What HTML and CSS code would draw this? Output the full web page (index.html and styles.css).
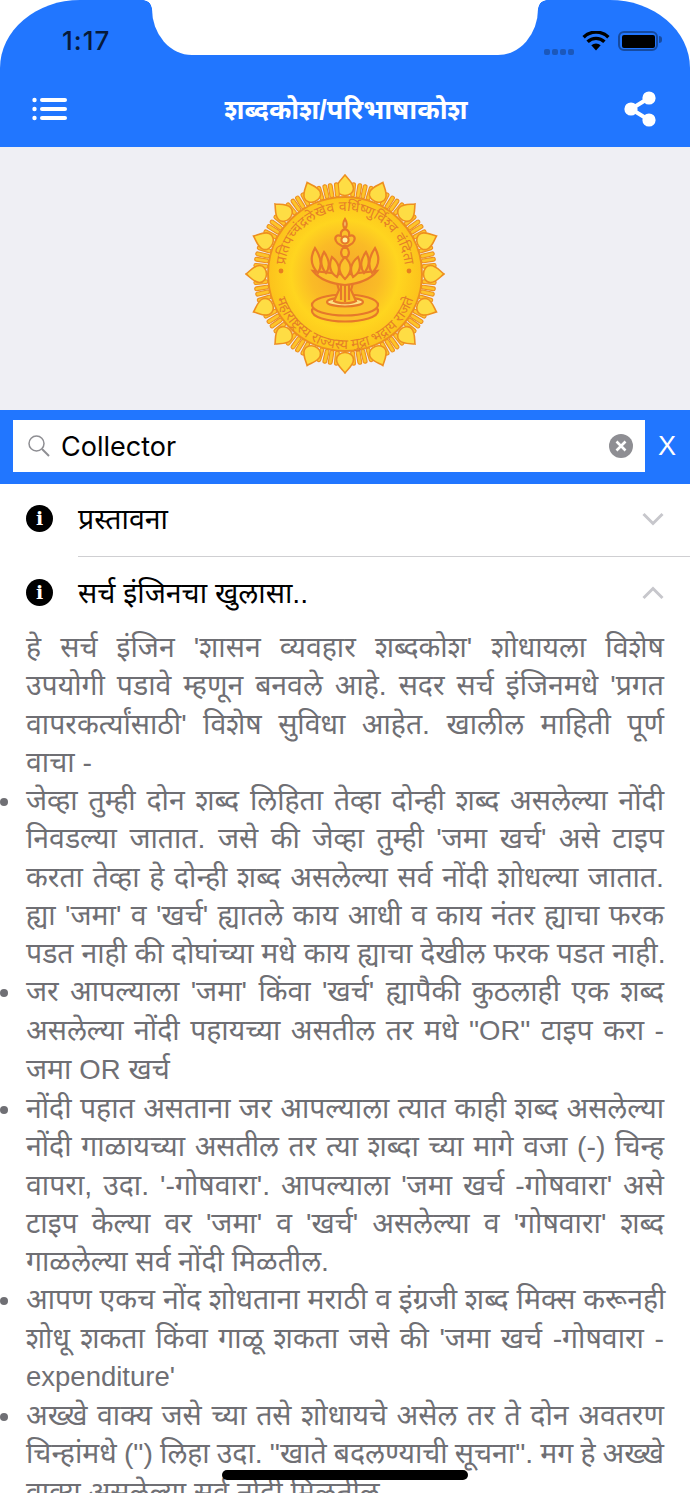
FILE: index.html
```html
<!DOCTYPE html>
<html lang="mr">
<head>
  <meta charset="UTF-8">
  <meta name="viewport" content="width=device-width, initial-scale=1.0">
  <title>शब्दकोश/परिभाषाकोश</title>
  <link rel="stylesheet" href="styles.css">
</head>
<body>
  <div class="app">
    <header class="top-bar">
      <div class="status-bar">
        <span class="clock">1:17</span>
        <div class="notch"></div>
        <div class="status-icons">
          <span class="signal"><i></i><i></i><i></i><i></i></span>
          <svg class="wifi" viewBox="0 0 28 20" width="28" height="20">
            <path d="M14 19.500 9.300 14.300a7 7 0 0 1 9.400 0z" fill="#000"/>
            <path d="M5.600 10.800a12 12 0 0 1 16.800 0" fill="none" stroke="#000" stroke-width="3.400"/>
            <path d="M1.600 6.200a17.800 17.800 0 0 1 24.800 0" fill="none" stroke="#000" stroke-width="3.400"/>
          </svg>
          <span class="battery"><span class="battery-fill"></span></span>
        </div>
      </div>
      <div class="nav-bar">
        <svg class="menu-icon" viewBox="0 0 36 24" width="36" height="24">
          <g fill="#fff">
            <circle cx="2.500" cy="3" r="2.200"/><circle cx="2.500" cy="12" r="2.200"/><circle cx="2.500" cy="21" r="2.200"/>
            <rect x="8" y="1" width="27" height="4" rx="2"/><rect x="8" y="10" width="27" height="4" rx="2"/><rect x="8" y="19" width="27" height="4" rx="2"/>
          </g>
        </svg>
        <h1 class="nav-title">शब्दकोश/परिभाषाकोश</h1>
        <svg class="share-icon" viewBox="0 0 32 36" width="32" height="36">
          <path d="M25 7 7 18l18 11" fill="none" stroke="#fff" stroke-width="4"/>
          <circle cx="25" cy="7" r="6.600" fill="#fff"/><circle cx="7" cy="18" r="6.600" fill="#fff"/><circle cx="25" cy="29" r="6.600" fill="#fff"/>
        </svg>
      </div>
    </header>

    <section class="logo-panel">
      <svg class="emblem" viewBox="-100 -100 200 200" width="200" height="200">
        <defs>
          <radialGradient id="disc">
            <stop offset="0" stop-color="#f5a62c"/>
            <stop offset="0.45" stop-color="#fabb26"/>
            <stop offset="0.7" stop-color="#ffd51f"/>
            <stop offset="1" stop-color="#fcc21c"/>
          </radialGradient>
          <rect id="lobe" x="-1.900" y="-91.500" width="3.800" height="14" rx="1.900" fill="#fdc52a" stroke="#ee8f1f" stroke-width="1.100"/>
          <g id="fringe">
            <use href="#lobe" transform="rotate(5.500)"/>
            <use href="#lobe" transform="rotate(9.500)"/>
            <use href="#lobe" transform="rotate(13)"/>
            <use href="#lobe" transform="rotate(17)"/>
          </g>
          <g id="petal">
            <path d="M0-99C3-95 8.500-91 8.500-85.500 8.500-81 4-78.500 0-78.500-4-78.500-8.500-81-8.500-85.500-8.500-91-3-95 0-99z" fill="#fedd44" stroke="#ee8f1f" stroke-width="1.600"/>
          </g>
          <g id="ray">
            <use href="#fringe"/>
            <use href="#petal"/>
          </g>
          <path id="ring-top" d="M-60-3A60 60 0 0 1 60-3"/>
          <path id="ring-bottom" d="M-72 3A72 72 0 0 0 72 3"/>
        </defs>
        <g>
          <use href="#ray"/><use href="#ray" transform="rotate(22.500)"/><use href="#ray" transform="rotate(45)"/><use href="#ray" transform="rotate(67.500)"/>
          <use href="#ray" transform="rotate(90)"/><use href="#ray" transform="rotate(112.500)"/><use href="#ray" transform="rotate(135)"/><use href="#ray" transform="rotate(157.500)"/>
          <use href="#ray" transform="rotate(180)"/><use href="#ray" transform="rotate(202.500)"/><use href="#ray" transform="rotate(225)"/><use href="#ray" transform="rotate(247.500)"/>
          <use href="#ray" transform="rotate(270)"/><use href="#ray" transform="rotate(292.500)"/><use href="#ray" transform="rotate(315)"/><use href="#ray" transform="rotate(337.500)"/>
        </g>
        <circle r="77" fill="url(#disc)" stroke="#ee8f1f" stroke-width="2"/>
        <text class="emblem-text"><textPath href="#ring-top" startOffset="50%" text-anchor="middle">प्रतिपच्चंद्रलेखेव वर्धिष्णुर्विश्व वंदिता</textPath></text>
        <text class="emblem-text"><textPath href="#ring-bottom" startOffset="50%" text-anchor="middle">महाराष्ट्रस्य राज्यस्य मुद्रा भद्राय राजते</textPath></text>
        <circle cx="-64" cy="-3" r="2.400" fill="#e8801f"/><circle cx="64" cy="-3" r="2.400" fill="#e8801f"/>
        <g class="lamp">
          <ellipse cx="0" cy="37" rx="33" ry="10.500"/>
          <ellipse cx="0" cy="31" rx="33" ry="10.500"/>
          <ellipse cx="0" cy="28" rx="18" ry="4.500" fill="#fde283"/>
          <path d="M-8 9H8L6 16 11 27C6 30-6 30-11 27L-6 16z"/>
          <path d="M-4 10V26M0 10V28M4 10V26" fill="none"/>
          <path d="M-32-3C-24 7-12 10 0 11 12 10 24 7 32-3L14-1 0 1-14-1z"/>
          <path d="M-27-1C-35-9-35-17-30-26-24-17-22-9-27-1z"/>
          <path d="M27-1C35-9 35-17 30-26 24-17 22-9 27-1z"/>
          <path d="M-19-1C-25-8-25-15-21-22-16-15-14-8-19-1z"/>
          <path d="M19-1C25-8 25-15 21-22 16-15 14-8 19-1z"/>
          <path d="M-8 3C-16-2-16-10-13-17-7-12-4-5-8 3z"/>
          <path d="M8 3C16-2 16-10 13-17 7-12 4-5 8 3z"/>
          <path d="M0 5C-8-3-7-10 0-17 7-10 8-3 0 5z"/>
          <path d="M-2-17C-5-20-4-24-2-26H2C4-24 5-20 2-17z"/>
          <path d="M-9-33C-11-37-8-40-4-38-5-42-3-44 0-45 3-44 5-42 4-38 8-40 11-37 9-33 8-30 4-29 3-28H-3C-4-29-8-30-9-33z"/>
          <circle cx="0" cy="-34" r="3.600" fill="#fff0a8"/>
          <path d="M0-45C-3-49-2-52 0-55 2-52 3-49 0-45z" fill="#fde283"/>
        </g>
      </svg>
    </section>

    <div class="search-bar">
      <div class="search-field">
        <svg class="search-glass" viewBox="0 0 24 24" width="24" height="24">
          <circle cx="9.500" cy="9.500" r="7.500" fill="none" stroke="#8e8e93" stroke-width="1.500"/>
          <path d="M15 15l7 7" stroke="#8e8e93" stroke-width="2"/>
        </svg>
        <span class="search-value">Collector</span>
        <svg class="search-clear" viewBox="0 0 24 24" width="24" height="24">
          <circle cx="12" cy="12" r="12" fill="#8e8e93"/>
          <path d="M7.500 7.500l9 9M16.500 7.500l-9 9" stroke="#fff" stroke-width="2.600"/>
        </svg>
      </div>
      <span class="search-cancel">X</span>
    </div>

    <div class="accordion-row first">
      <span class="info-icon">i</span>
      <span class="row-title">प्रस्तावना</span>
      <svg class="chevron" viewBox="0 0 22 14" width="22" height="14"><path d="M1.500 2 11 11.500 20.500 2" fill="none" stroke="#c7c7cc" stroke-width="3"/></svg>
    </div>
    <div class="accordion-row second">
      <span class="info-icon">i</span>
      <span class="row-title">सर्च इंजिनचा खुलासा..</span>
      <svg class="chevron" viewBox="0 0 22 14" width="22" height="14"><path d="M1.500 12 11 2.500 20.500 12" fill="none" stroke="#c7c7cc" stroke-width="3"/></svg>
    </div>

    <div class="help-text">
      <p>
        <span class="line">हे सर्च इंजिन 'शासन व्यवहार शब्दकोश' शोधायला विशेष</span>
        <span class="line">उपयोगी पडावे म्हणून बनवले आहे. सदर सर्च इंजिनमधे 'प्रगत</span>
        <span class="line">वापरकर्त्यांसाठी' विशेष सुविधा आहेत. खालील माहिती पूर्ण</span>
        <span class="line end">वाचा -</span>
      </p>
      <ul>
        <li>
          <span class="line">जेव्हा तुम्ही दोन शब्द लिहिता तेव्हा दोन्ही शब्द असलेल्या नोंदी</span>
          <span class="line">निवडल्या जातात. जसे की जेव्हा तुम्ही 'जमा खर्च' असे टाइप</span>
          <span class="line">करता तेव्हा हे दोन्ही शब्द असलेल्या सर्व नोंदी शोधल्या जातात.</span>
          <span class="line">ह्या 'जमा' व 'खर्च' ह्यातले काय आधी व काय नंतर ह्याचा फरक</span>
          <span class="line end">पडत नाही की दोघांच्या मधे काय ह्याचा देखील फरक पडत नाही.</span>
        </li>
        <li>
          <span class="line">जर आपल्याला 'जमा' किंवा 'खर्च' ह्यापैकी कुठलाही एक शब्द</span>
          <span class="line">असलेल्या नोंदी पहायच्या असतील तर मधे "<span class="latin">OR</span>" टाइप करा -</span>
          <span class="line end">जमा <span class="latin">OR</span> खर्च</span>
        </li>
        <li>
          <span class="line">नोंदी पहात असताना जर आपल्याला त्यात काही शब्द असलेल्या</span>
          <span class="line">नोंदी गाळायच्या असतील तर त्या शब्दा च्या मागे वजा (-) चिन्ह</span>
          <span class="line">वापरा, उदा. '-गोषवारा'. आपल्याला 'जमा खर्च -गोषवारा' असे</span>
          <span class="line">टाइप केल्या वर 'जमा' व 'खर्च' असलेल्या व 'गोषवारा' शब्द</span>
          <span class="line end">गाळलेल्या सर्व नोंदी मिळतील.</span>
        </li>
        <li>
          <span class="line">आपण एकच नोंद शोधताना मराठी व इंग्रजी शब्द मिक्स करूनही</span>
          <span class="line">शोधू शकता किंवा गाळू शकता जसे की 'जमा खर्च -गोषवारा -</span>
          <span class="line end"><span class="latin">expenditure'</span></span>
        </li>
        <li>
          <span class="line">अख्खे वाक्य जसे च्या तसे शोधायचे असेल तर ते दोन अवतरण</span>
          <span class="line tight">चिन्हांमधे (") लिहा उदा. "खाते बदलण्याची सूचना". मग हे अख्खे</span>
          <span class="line end">वाक्य असलेल्या सर्व नोंदी मिळतील.</span>
        </li>
      </ul>
    </div>

    <div class="home-indicator"></div>
  </div>
</body>
</html>
```

FILE: styles.css
```css
html, body {
  margin: 0;
  height: 100%;
  background: #fff;
}

body {
  font-family: "Liberation Sans", "Noto Sans", Arial, sans-serif;
  overflow: hidden;
}

.app {
  position: relative;
  width: 690px;
  height: 1493px;
  overflow: hidden;
  background: #fff;
}

/* top bar */
.top-bar {
  height: 147px;
  background: #2176ff;
  border-radius: 80px 80px 0 0 / 68px 68px 0 0;
  display: flex;
  flex-direction: column;
}

.status-bar {
  height: 78px;
  position: relative;
  display: flex;
  justify-content: space-between;
  align-items: flex-start;
  padding: 26px 32px 0 62px;
  box-sizing: border-box;
}

.clock {
  font-family: Inter, "Liberation Sans", sans-serif;
  font-size: 26px;
  line-height: 30px;
  font-weight: 500;
  letter-spacing: 1px;
  color: #071a3a;
}

.notch {
  position: absolute;
  top: 0;
  left: 152px;
  width: 386px;
  height: 55px;
  background: #fff;
  border-radius: 0 0 40px 40px / 0 0 46px 46px;
}

.notch::before,
.notch::after {
  content: "";
  position: absolute;
  top: 0;
  width: 9px;
  height: 9px;
}

.notch::before {
  left: -9px;
  background: radial-gradient(circle at 0 100%, transparent 8.500px, #fff 9px);
}

.notch::after {
  right: -9px;
  background: radial-gradient(circle at 100% 100%, transparent 8.500px, #fff 9px);
}

.status-icons {
  display: flex;
  align-items: center;
  height: 30px;
}

.signal {
  display: flex;
  gap: 2px;
  align-self: flex-end;
  margin-bottom: 1px;
  margin-right: 8px;
}

.signal i {
  width: 6px;
  height: 6px;
  border-radius: 2px;
  background: #1b58bb;
}

.wifi {
  margin-right: 8px;
}

.battery {
  position: relative;
  display: block;
  width: 33px;
  height: 13px;
  border: 2px solid #164a9f;
  border-radius: 6px;
  padding: 1.500px;
  box-sizing: content-box;
}

.battery::after {
  content: "";
  position: absolute;
  right: -6px;
  top: 3px;
  width: 3px;
  height: 7px;
  border-radius: 0 3px 3px 0;
  background: #164a9f;
}

.battery-fill {
  display: block;
  height: 100%;
  background: #000;
  border-radius: 2px;
}

.nav-bar {
  flex: 1;
  display: flex;
  align-items: center;
  justify-content: space-between;
  padding: 0 34px 8px 32px;
}

.nav-title {
  margin: 0;
  font-size: 27px;
  font-weight: 700;
  color: #fff;
}

/* emblem */
.logo-panel {
  height: 263px;
  box-sizing: border-box;
  padding-bottom: 9px;
  background: #efeff4;
  display: flex;
  align-items: center;
  justify-content: center;
}

.emblem-text {
  font-size: 14px;
  fill: #e57f28;
}

.lamp {
  fill: #fbc12b;
  stroke: #e6782a;
  stroke-width: 2.200;
}

/* search */
.search-bar {
  height: 74px;
  box-sizing: border-box;
  padding: 0 0 2px 13px;
  background: #2176ff;
  display: flex;
  align-items: center;
  gap: 13px;
}

.search-field {
  width: 632px;
  height: 52px;
  background: #fff;
  display: flex;
  align-items: center;
  padding: 0 12px 0 14px;
  box-sizing: border-box;
  gap: 10px;
}

.search-value {
  flex: 1;
  font-family: Inter, "Liberation Sans", sans-serif;
  font-size: 27px;
  color: #000;
}

.search-cancel {
  font-family: "Liberation Sans", Arial, sans-serif;
  font-size: 27px;
  color: #fff;
}

/* rows */
.accordion-row {
  display: flex;
  align-items: center;
  padding: 0 26px;
  box-sizing: border-box;
  position: relative;
}

.accordion-row.first {
  height: 73px;
  padding-bottom: 4px;
}

.accordion-row.second {
  height: 71px;
}

.accordion-row.first::after {
  content: "";
  position: absolute;
  left: 78px;
  right: 0;
  bottom: 0;
  height: 1px;
  background: #cfcfd2;
}

.info-icon {
  width: 27px;
  height: 27px;
  border-radius: 50%;
  background: #000;
  color: #fff;
  font-family: "DejaVu Serif", serif;
  font-size: 19px;
  font-weight: 700;
  line-height: 27px;
  text-align: center;
  margin-right: 25px;
}

.row-title {
  flex: 1;
  font-size: 28.500px;
  line-height: 40px;
  color: #000;
}

/* help text */
.help-text {
  padding: 0 26px;
  font-size: 28.400px;
  line-height: 38.250px;
  color: #6f6f74;
}

.help-text p,
.help-text ul {
  margin: 0;
  padding: 0;
  list-style: none;
}

.help-text li {
  position: relative;
}

.help-text li::before {
  content: "";
  position: absolute;
  left: -26px;
  top: 17px;
  width: 8px;
  height: 8px;
  border-radius: 50%;
  background: #6f6f74;
}

.line {
  display: block;
  white-space: nowrap;
  text-align: justify;
  text-align-last: justify;
}

.line.end {
  text-align-last: left;
}

.line.tight {
  word-spacing: -1px;
}

.latin {
  font-size: 27.500px;
}

.home-indicator {
  position: absolute;
  left: 222px;
  bottom: 13px;
  width: 246px;
  height: 10px;
  border-radius: 5px;
  background: #000;
}
```
